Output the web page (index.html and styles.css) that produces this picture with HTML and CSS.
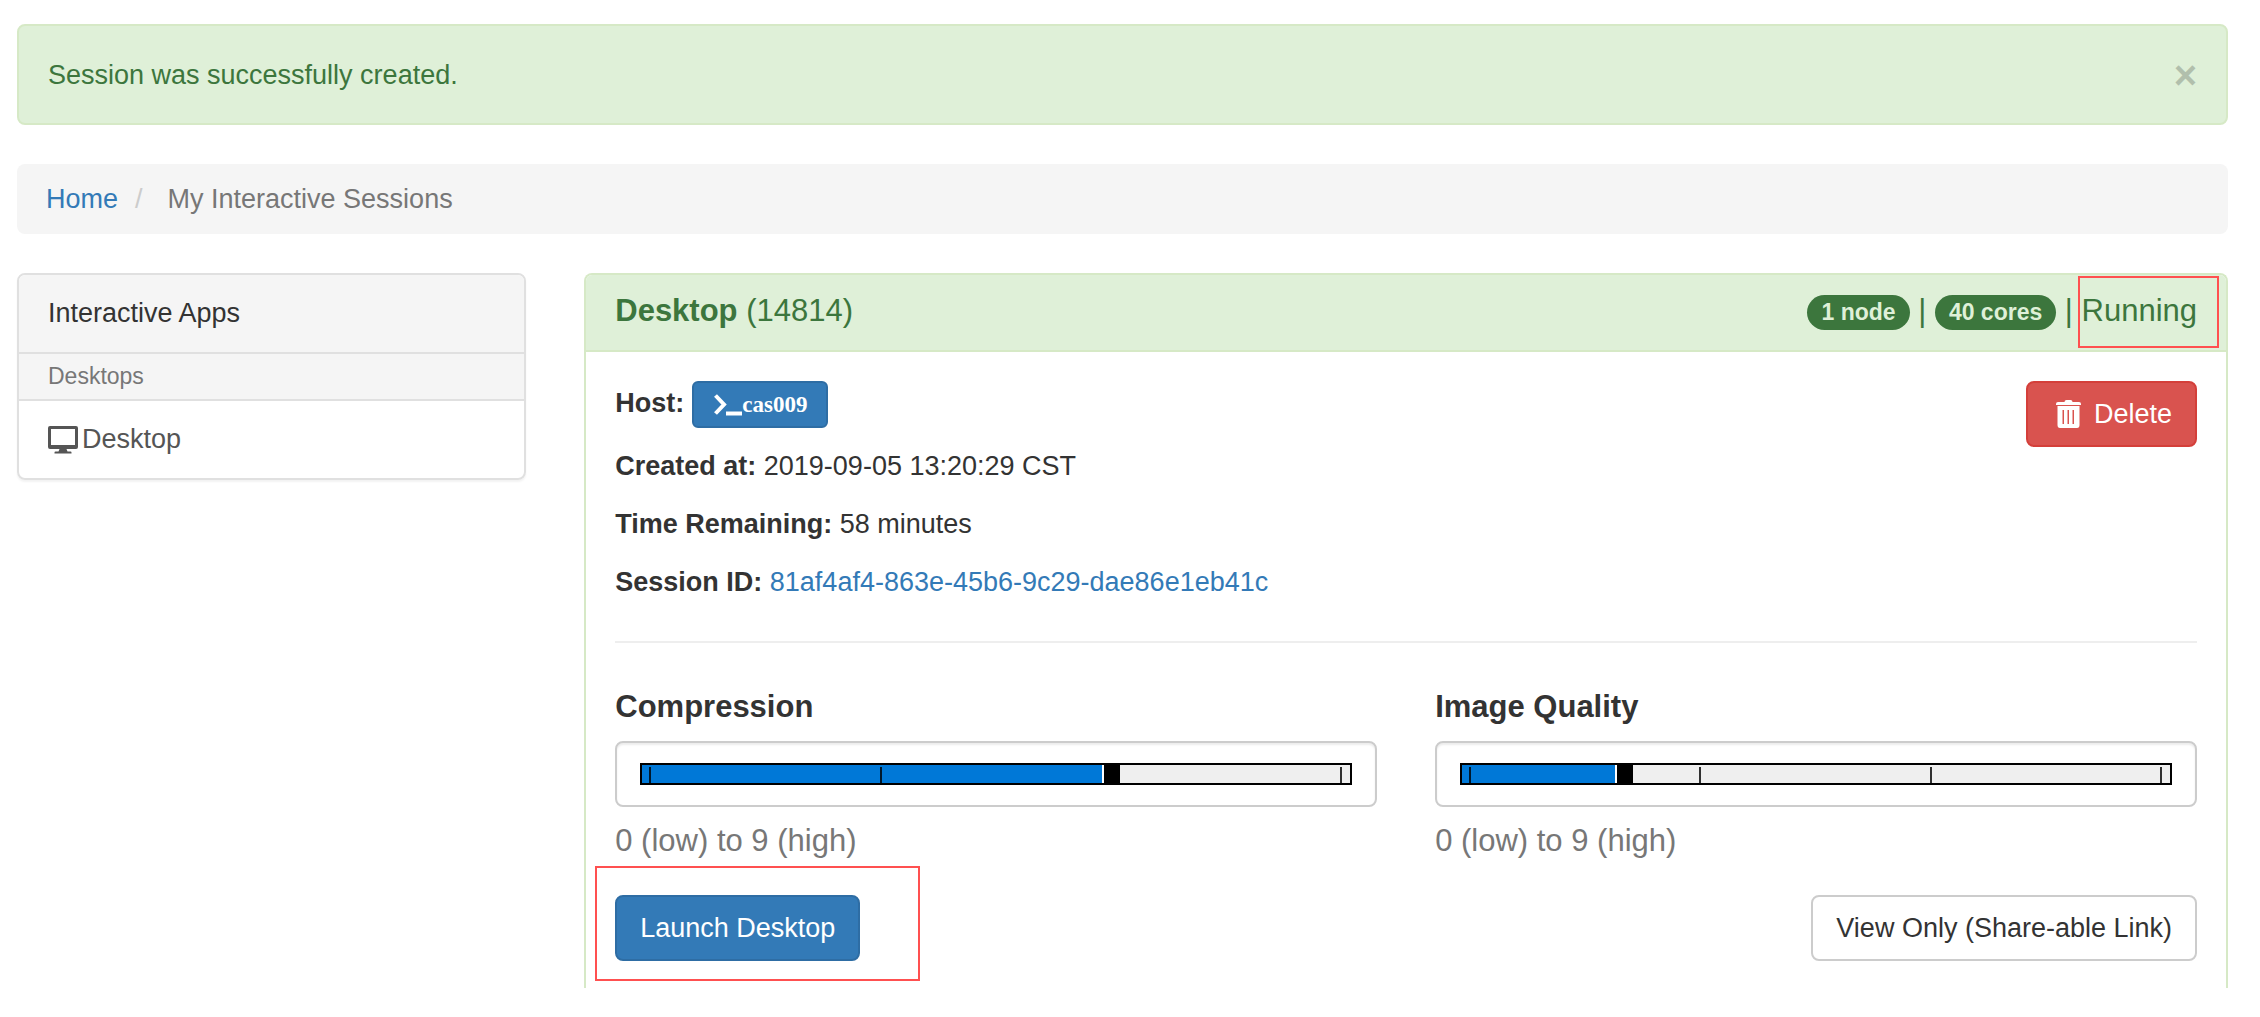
FILE: index.html
```html
<!DOCTYPE html>
<html lang="en">
<head>
    <meta charset="UTF-8">
    <meta name="viewport" content="width=device-width, initial-scale=1.0">
    <title>My Interactive Sessions</title>
    <link rel="stylesheet" href="styles.css">
</head>
<body>

    <div class="alert" role="alert">
        <span>Session was successfully created.</span>
        <button type="button" class="close" aria-label="Close">&times;</button>
    </div>

    <ol class="breadcrumb">
        <li><a href="#">Home</a></li>
        <li class="active">My Interactive Sessions</li>
    </ol>

    <div class="row">
        <nav class="sidebar">
            <div class="list-heading">Interactive Apps</div>
            <div class="list-subheading">Desktops</div>
            <a class="list-item" href="#">
                <svg class="icon-desktop" viewBox="0 0 30 28" aria-hidden="true">
                    <path fill-rule="evenodd" d="M2 0H28Q30 0 30 2V21Q30 23 28 23H18.500L19.500 25.500H22.500Q23.500 25.500 23.500 26.500V27.500H6.500V26.500Q6.500 25.500 7.500 25.500H10.500L11.500 23H2Q0 23 0 21V2Q0 0 2 0ZM3 3V19H27V3Z"/>
                </svg>
                <span>Desktop</span>
            </a>
        </nav>

        <main class="panel">
            <div class="panel-heading">
                <h3><strong>Desktop</strong> (14814)</h3>
                <div class="status">
                    <span class="badge">1 node</span> | <span class="badge">40 cores</span> | <span class="marked">Running</span>
                </div>
            </div>

            <div class="panel-body">
                <div class="session">
                    <div class="session-info">
                        <p class="host">
                            <strong>Host:</strong>
                            <button type="button" class="btn btn-primary btn-host"><svg class="icon-terminal" viewBox="0 0 29 22" aria-hidden="true"><path d="M2.500 1.500L11 10.500L2.500 19.500" fill="none" stroke="currentColor" stroke-width="4"/><path d="M13 17.500H29V21.500H13Z"/></svg>cas009</button>
                        </p>
                        <p><strong>Created at:</strong> 2019-09-05 13:20:29 CST</p>
                        <p><strong>Time Remaining:</strong> 58 minutes</p>
                        <p><strong>Session ID:</strong> <a href="#">81af4af4-863e-45b6-9c29-dae86e1eb41c</a></p>
                    </div>
                    <button type="button" class="btn btn-danger">
                        <svg class="icon-trash" viewBox="0 0 25 28" aria-hidden="true">
                            <path fill-rule="evenodd" d="M8.500 2Q8.500 0 10.500 0H14.500Q16.500 0 16.500 2H23Q25 2 25 4V5H0V4Q0 2 2 2ZM1.500 6H23.500V25Q23.500 28 21 28H4Q1.500 28 1.500 25ZM6.500 10V24H8V10ZM11.500 10V24H13V10ZM16.500 10V24H18V10Z"/>
                        </svg>
                        Delete
                    </button>
                </div>

                <hr>

                <form id="launchForm">
                    <div class="sliders">
                        <div class="form-group">
                            <label for="compression">Compression</label>
                            <div class="form-control">
                                <input type="range" id="compression" min="0" max="9" value="6" style="--pos: 0.6667">
                            </div>
                            <p class="help-block">0 (low) to 9 (high)</p>
                        </div>
                        <div class="form-group">
                            <label for="quality">Image Quality</label>
                            <div class="form-control">
                                <input type="range" id="quality" min="0" max="9" value="2" style="--pos: 0.2222">
                            </div>
                            <p class="help-block">0 (low) to 9 (high)</p>
                        </div>
                    </div>

                    <div class="actions">
                        <div class="launch">
                            <button type="submit" class="btn btn-primary">Launch Desktop</button>
                        </div>
                        <a class="btn btn-default" href="#">View Only (Share-able Link)</a>
                    </div>
                </form>
            </div>
        </main>
    </div>

    <script>
        document.querySelectorAll("input[type=range]").forEach(slider => {
            slider.addEventListener("input", () => {
                slider.style.setProperty("--pos", slider.value / slider.max);
            });
        });

        document.getElementById("launchForm").addEventListener("submit", (event) => {
            event.preventDefault();
        });

        document.querySelector(".close").addEventListener("click", () => {
            document.querySelector(".alert").remove();
        });
    </script>
</body>
</html>
```

FILE: styles.css
```css
* {
    box-sizing: border-box;
}

body {
    font-family: "Liberation Sans", Arial, sans-serif;
    font-size: 27px;
    line-height: 39px;
    color: #333;
    background-color: #fff;
    margin: 0;
    padding: 24px 32px 30px 17px;
}

a {
    color: #337ab7;
    text-decoration: none;
}

.alert {
    display: flex;
    justify-content: space-between;
    align-items: center;
    padding: 30px 29px 28px;
    margin-bottom: 39px;
    color: #3c763d;
    background-color: #dff0d8;
    border: 2px solid #d6e9c6;
    border-radius: 8px;
}

.close {
    padding: 0;
    border: 0;
    background: none;
    color: #000;
    font-family: inherit;
    font-size: 40px;
    font-weight: bold;
    line-height: 39px;
    opacity: 0.2;
    cursor: pointer;
}

.breadcrumb {
    display: flex;
    margin: 0 0 39px;
    padding: 16px 29px 15px;
    list-style: none;
    background-color: #f5f5f5;
    border-radius: 8px;
}

.breadcrumb .active {
    color: #777;
}

.breadcrumb .active::before {
    content: "/";
    padding: 0 25px 0 17px;
    color: #ccc;
}

.row {
    display: grid;
    grid-template-columns: repeat(4, 1fr);
    gap: 58px;
    align-items: start;
}

.sidebar {
    border: 2px solid #e0e0e0;
    border-radius: 8px;
    box-shadow: 0 2px 2px rgba(0, 0, 0, 0.05);
    overflow: hidden;
}

.list-heading,
.list-subheading,
.list-item {
    padding: 19px 29px;
}

.list-heading,
.list-subheading {
    background-color: #f5f5f5;
    border-bottom: 2px solid #e0e0e0;
}

.list-subheading {
    padding-top: 6px;
    padding-bottom: 6px;
    font-size: 23px;
    line-height: 33px;
    color: #777;
}

.list-item {
    display: flex;
    align-items: center;
    gap: 4px;
    color: #555;
}

svg {
    fill: currentColor;
}

.icon-desktop {
    width: 30px;
    height: 28px;
}

.panel {
    grid-column: span 3;
    border: 2px solid #d6e9c6;
    border-bottom: 0;
    border-radius: 8px 8px 0 0;
}

.panel-heading {
    display: flex;
    justify-content: space-between;
    padding: 17px 29px 20px;
    font-size: 31px;
    line-height: 37px;
    color: #3c763d;
    background-color: #dff0d8;
    border-bottom: 2px solid #d6e9c6;
    border-radius: 6px 6px 0 0;
}

.panel-heading h3 {
    margin: 0;
    font-size: 31px;
    font-weight: normal;
}

.badge {
    display: inline-block;
    padding: 6px 14px;
    font-size: 23px;
    font-weight: bold;
    line-height: 23px;
    vertical-align: middle;
    color: #dff0d8;
    background-color: #3c763d;
    border-radius: 19px;
}

/* red highlight frames */
.marked,
.launch {
    position: relative;
}

.marked::after,
.launch::after {
    content: "";
    position: absolute;
    border: 2px solid #ff5050;
    pointer-events: none;
}

.marked::after {
    inset: -17px -22px -20px -4px;
}

.launch::after {
    inset: -29px -60px -20px -20px;
}

.panel-body {
    padding: 29px 29px 27px;
}

.session {
    display: flex;
    justify-content: space-between;
    align-items: flex-start;
}

.session p {
    margin: 0 0 19px;
}

.session p:last-child {
    margin-bottom: 0;
}

.host {
    display: flex;
    align-items: baseline;
    gap: 8px;
}

.btn {
    padding: 12px 23px;
    border: 2px solid transparent;
    border-radius: 8px;
    font-family: inherit;
    font-size: 27px;
    line-height: 38px;
    cursor: pointer;
}

.btn-primary {
    color: #fff;
    background-color: #337ab7;
    border-color: #2e6da4;
}

.btn-danger {
    display: flex;
    align-items: center;
    gap: 13px;
    padding-left: 28px;
    color: #fff;
    background-color: #d9534f;
    border-color: #d43f3a;
}

.btn-default {
    color: #333;
    background-color: #fff;
    border-color: #ccc;
}

.btn-host {
    padding: 5px 19px;
    border-radius: 6px;
    font-family: "Liberation Serif", "Times New Roman", serif;
    font-size: 23px;
    font-weight: bold;
    line-height: 33px;
}

.icon-terminal {
    width: 29px;
    height: 22px;
    vertical-align: -4px;
}

.icon-trash {
    width: 25px;
    height: 28px;
}

hr {
    margin: 39px 0;
    border: 0;
    border-top: 2px solid #eee;
}

.sliders {
    display: grid;
    grid-template-columns: repeat(2, 1fr);
    gap: 58px;
}

label {
    display: block;
    margin-bottom: 10px;
    padding-top: 1px;
    font-size: 31px;
    font-weight: bold;
    line-height: 48px;
}

.form-control {
    display: flex;
    align-items: center;
    height: 66px;
    padding: 0 23px;
    border: 2px solid #ccc;
    border-radius: 8px;
    box-shadow: inset 0 2px 2px rgba(0, 0, 0, 0.08);
}

input[type="range"] {
    --tick: linear-gradient(rgba(0, 0, 0, 0.8), rgba(0, 0, 0, 0.8));
    -webkit-appearance: none;
    appearance: none;
    flex: 1;
    height: 22px;
    margin: 0;
    border: 2px solid #000;
    background-color: #efefef;
    background-image: var(--tick), var(--tick), var(--tick), var(--tick), linear-gradient(#0078d7, #0078d7);
    background-repeat: no-repeat;
    background-origin: padding-box;
    background-size: 2px 16px, 2px 16px, 2px 16px, 2px 16px, calc((100% - 18px) * var(--pos)) 100%;
    background-position: left 7px bottom, calc(33.33% + 2px) bottom, calc(66.67% - 3px) bottom, right 8px bottom, left top;
}

input[type="range"]::-webkit-slider-thumb {
    -webkit-appearance: none;
    appearance: none;
    width: 18px;
    height: 18px;
    border-left: 2px solid #fff;
    background-color: #000;
}

.help-block {
    margin: 10px 0 12px;
    font-size: 31px;
    line-height: 48px;
    color: #777;
}

.actions {
    display: flex;
    justify-content: space-between;
    margin-top: 18px;
}
```
